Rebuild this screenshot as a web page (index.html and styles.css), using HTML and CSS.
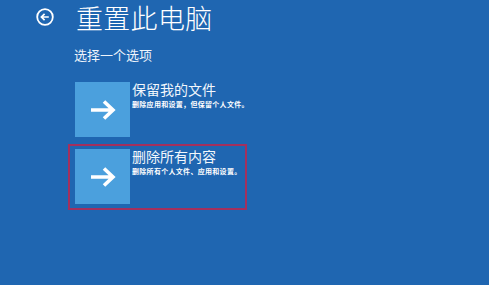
FILE: index.html
```html
<!DOCTYPE html>
<html>
<head>
  <meta charset="utf-8">
  <link rel="stylesheet" href="styles.css">
</head>
<body>
  <div class="header">
    <svg class="back" width="18" height="18" viewBox="0 0 18 18">
      <circle cx="9" cy="9" r="7.8" fill="none" stroke="#fff" stroke-width="1.8"/>
      <path d="M12.8 9H5.4M8.6 5.8L5.4 9l3.2 3.2" fill="none" stroke="#fff" stroke-width="1.7"/>
    </svg>
    <h1>重置此电脑</h1>
  </div>
  <p class="subtitle">选择一个选项</p>

  <div class="options">
    <div class="option">
      <div class="tile">
        <svg width="28" height="24" viewBox="0 0 28 24">
          <path d="M2 12H24M15 3.5L24 12l-9 8.5" fill="none" stroke="#fff" stroke-width="3.6"/>
        </svg>
      </div>
      <div class="text">
        <div class="name">保留我的文件</div>
        <div class="desc">删除应用和设置，但保留个人文件。</div>
      </div>
    </div>

    <div class="option selected">
      <div class="tile">
        <svg width="28" height="24" viewBox="0 0 28 24">
          <path d="M2 12H24M15 3.5L24 12l-9 8.5" fill="none" stroke="#fff" stroke-width="3.6"/>
        </svg>
      </div>
      <div class="text">
        <div class="name">删除所有内容</div>
        <div class="desc">删除所有个人文件、应用和设置。</div>
      </div>
    </div>
  </div>
</body>
</html>
```

FILE: styles.css
```css
body{
  margin:0;
  height:285px;
  background-color:#1f66b1;
  color:#fff;
  font-family:"Noto Sans CJK SC", "Noto Sans", sans-serif;
}
.header{
  display:flex;
  align-items:flex-start;
  padding-left:36px;
}
.back{
  margin-top:8px;
  margin-right:22px;
}
h1{
  margin:0;
  font-size:27px;
  font-weight:300;
  line-height:36px;
  letter-spacing:0.3px;
}
.subtitle{
  margin:11px 0 0 74px;
  font-size:13px;
  line-height:16px;
  color:#eef4fb;
}
.options{
  margin-top:14px;
  margin-left:68px;
}
.option{
  display:flex;
  width:179px;
  box-sizing:border-box;
  padding:3px 5px 4px 5px;
  border:2px solid transparent;
}
.option + .option{
  margin-top:1px;
}
.option.selected{
  border-color:#a3305e;
}
.tile{
  width:55px;
  height:55px;
  flex-shrink:0;
  background-color:#4ba0dd;
  display:flex;
  align-items:center;
  justify-content:center;
}
.text{
  margin-left:2px;
}
.name{
  font-size:14px;
  line-height:14px;
  color:#f2f7fc;
}
.desc{
  margin-top:4px;
  font-size:7px;
  line-height:8px;
  font-weight:bold;
  letter-spacing:0.3px;
  white-space:nowrap;
}
```
